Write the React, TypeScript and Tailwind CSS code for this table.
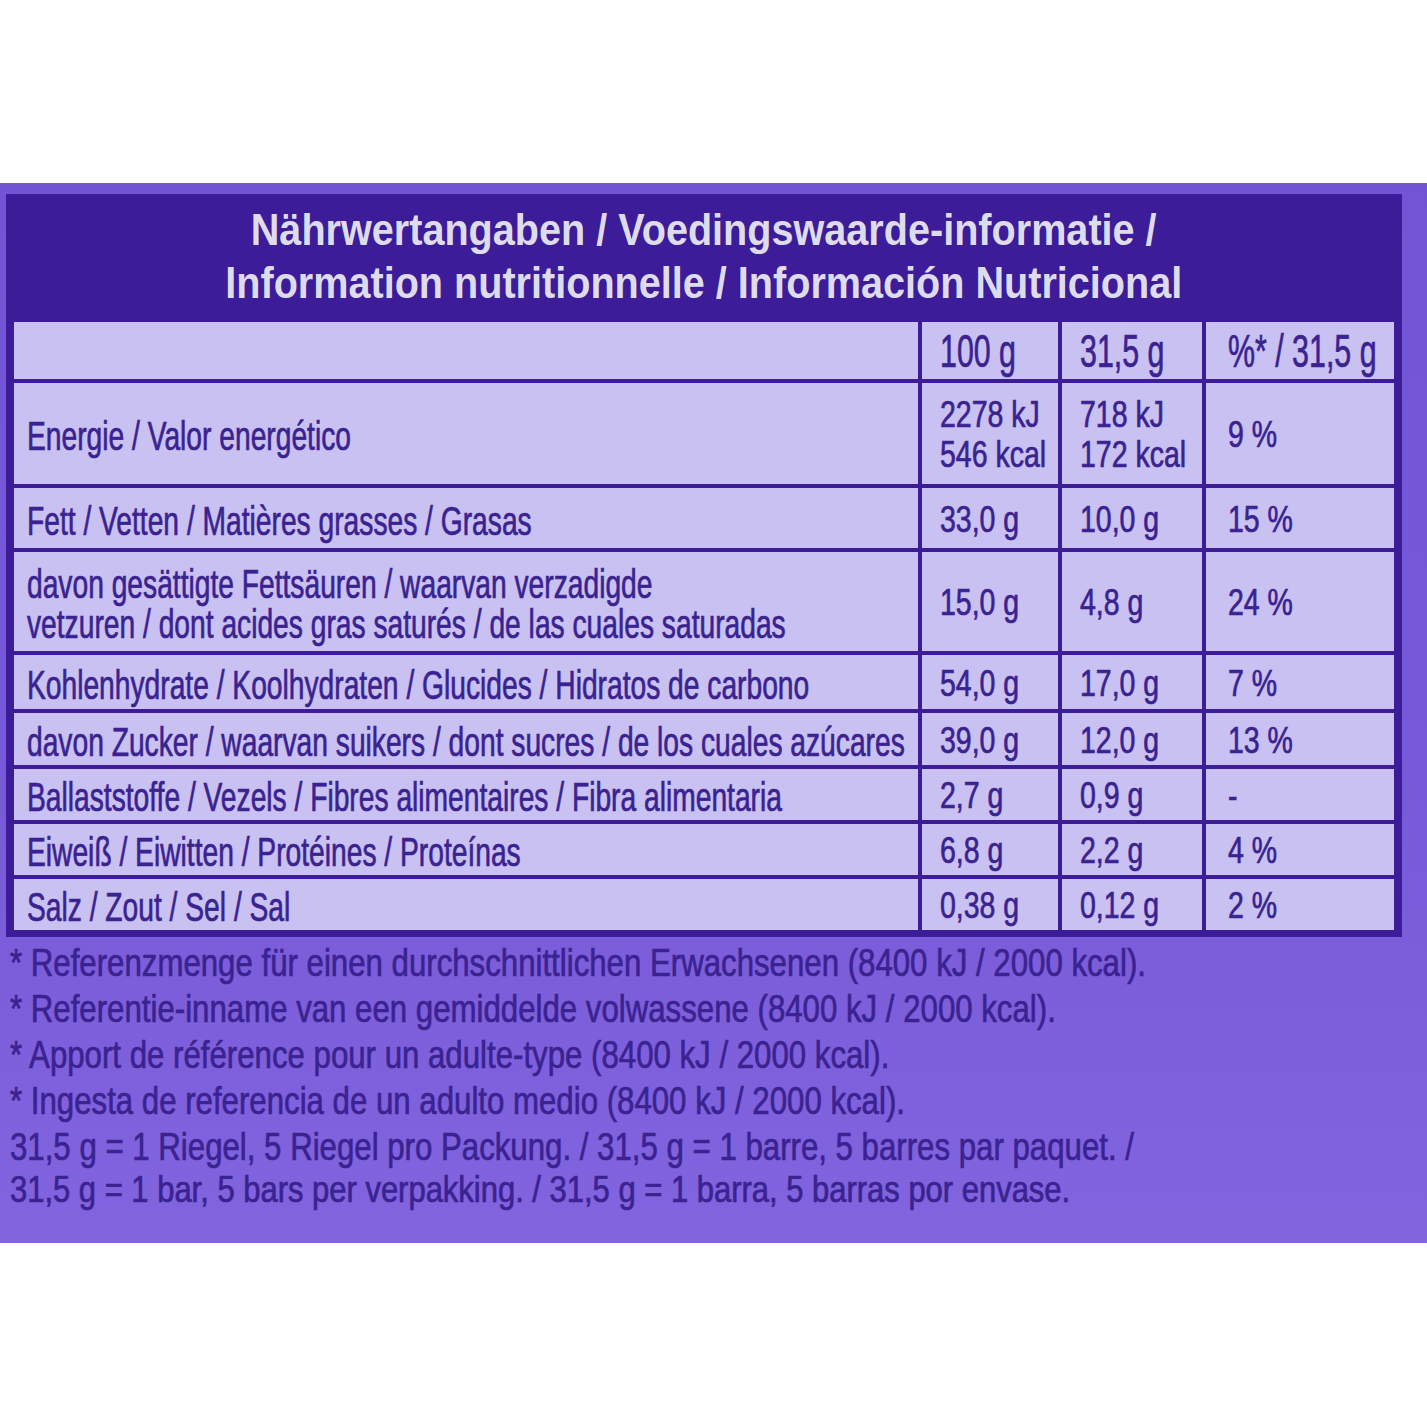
import React from 'react';

interface Row {
  label: string[];
  a: string[];
  b: string[];
  c: string;
}

const rows: Row[] = [
  { label: ['Energie / Valor energético'], a: ['2278 kJ', '546 kcal'], b: ['718 kJ', '172 kcal'], c: '9 %' },
  { label: ['Fett / Vetten / Matières grasses / Grasas'], a: ['33,0 g'], b: ['10,0 g'], c: '15 %' },
  {
    label: ['davon gesättigte Fettsäuren / waarvan verzadigde', 'vetzuren / dont acides gras saturés / de las cuales saturadas'],
    a: ['15,0 g'],
    b: ['4,8 g'],
    c: '24 %',
  },
  { label: ['Kohlenhydrate / Koolhydraten / Glucides / Hidratos de carbono'], a: ['54,0 g'], b: ['17,0 g'], c: '7 %' },
  { label: ['davon Zucker / waarvan suikers / dont sucres / de los cuales azúcares'], a: ['39,0 g'], b: ['12,0 g'], c: '13 %' },
  { label: ['Ballaststoffe / Vezels / Fibres alimentaires / Fibra alimentaria'], a: ['2,7 g'], b: ['0,9 g'], c: '-' },
  { label: ['Eiweiß / Eiwitten / Protéines / Proteínas'], a: ['6,8 g'], b: ['2,2 g'], c: '4 %' },
  { label: ['Salz / Zout / Sel / Sal'], a: ['0,38 g'], b: ['0,12 g'], c: '2 %' },
];

const notes = [
  '* Referenzmenge für einen durchschnittlichen Erwachsenen (8400 kJ / 2000 kcal).',
  '* Referentie-inname van een gemiddelde volwassene (8400 kJ / 2000 kcal).',
  '* Apport de référence pour un adulte-type (8400 kJ / 2000 kcal).',
  '* Ingesta de referencia de un adulto medio (8400 kJ / 2000 kcal).',
  '31,5 g = 1 Riegel, 5 Riegel pro Packung. / 31,5 g = 1 barre, 5 barres par paquet. /',
];

// heavier strokes, the print face is a medium condensed sans
const ink = 'text-[#3a2290] [-webkit-text-stroke:0.7px_#3a2290]';

const Label: React.FC<{ lines: string[] }> = ({ lines }) => (
  <div className="bg-[#c8c1f1] flex items-center pl-[13px] pt-[5px]">
    <div className={`inline-block origin-left scale-x-[0.705] whitespace-nowrap text-[40px] leading-[40px] ${ink}`}>
      {lines.map((l, i) => (
        <div key={i}>{l}</div>
      ))}
    </div>
  </div>
);

const Value: React.FC<{ lines: string[]; pad?: string }> = ({ lines, pad = 'pl-[18px]' }) => (
  <div className={`bg-[#c8c1f1] flex items-center ${pad} pt-[3px]`}>
    <div className={`inline-block origin-left scale-x-[0.77] whitespace-nowrap text-[37px] leading-[40px] ${ink}`}>
      {lines.map((l, i) => (
        <div key={i}>{l}</div>
      ))}
    </div>
  </div>
);

const Head: React.FC<{ text: string; pad?: string }> = ({ text, pad = 'pl-[18px]' }) => (
  <div className={`bg-[#c8c1f1] flex items-center ${pad}`}>
    <span className={`inline-block origin-left scale-x-[0.66] whitespace-nowrap text-[46px] leading-[46px] ${ink}`}>
      {text}
    </span>
  </div>
);

export default function App() {
  return (
    <div className="min-h-screen bg-white font-['Liberation_Sans',Arial,sans-serif]">
      <div className="h-[183px]" />
      <div className="h-[1060px] bg-linear-to-b from-[#7254d4] via-[#7758d8] to-[#8164de] pt-[11px] pl-[6px]">
        <div className="w-[1396px] bg-[#3c1c98] px-[8px] pb-[7px]">
          <div className="h-[128px] flex flex-col items-center justify-center pb-[4px] text-[#dedcec] font-bold text-[45px] leading-[53px]">
            <span className="inline-block scale-x-[0.88] whitespace-nowrap">Nährwertangaben / Voedingswaarde-informatie /</span>
            <span className="inline-block scale-x-[0.88] whitespace-nowrap">Information nutritionnelle / Información Nutricional</span>
          </div>
          <div className="grid grid-cols-[904px_136px_140px_188px] grid-rows-[57px_101px_60px_99px_54px_52px_51px_51px_51px] gap-[4px]">
            <div className="bg-[#c8c1f1]" />
            <Head text="100 g" />
            <Head text="31,5 g" />
            <Head text="%* / 31,5 g" pad="pl-[22px]" />
            {rows.map((r, i) => (
              <React.Fragment key={i}>
                <Label lines={r.label} />
                <Value lines={r.a} />
                <Value lines={r.b} />
                <Value lines={[r.c]} pad="pl-[22px]" />
              </React.Fragment>
            ))}
          </div>
        </div>
        <div className="mt-[3px] pl-[4px] text-[39px] leading-[46px]">
          {notes.map((n, i) => (
            <div key={i} className={`origin-left scale-x-[0.8] whitespace-nowrap ${ink}`}>
              {n}
            </div>
          ))}
          <div className={`origin-left scale-x-[0.86] whitespace-nowrap text-[36px] leading-[40px] ${ink}`}>
            31,5 g = 1 bar, 5 bars per verpakking. / 31,5 g = 1 barra, 5 barras por envase.
          </div>
        </div>
      </div>
    </div>
  );
}
